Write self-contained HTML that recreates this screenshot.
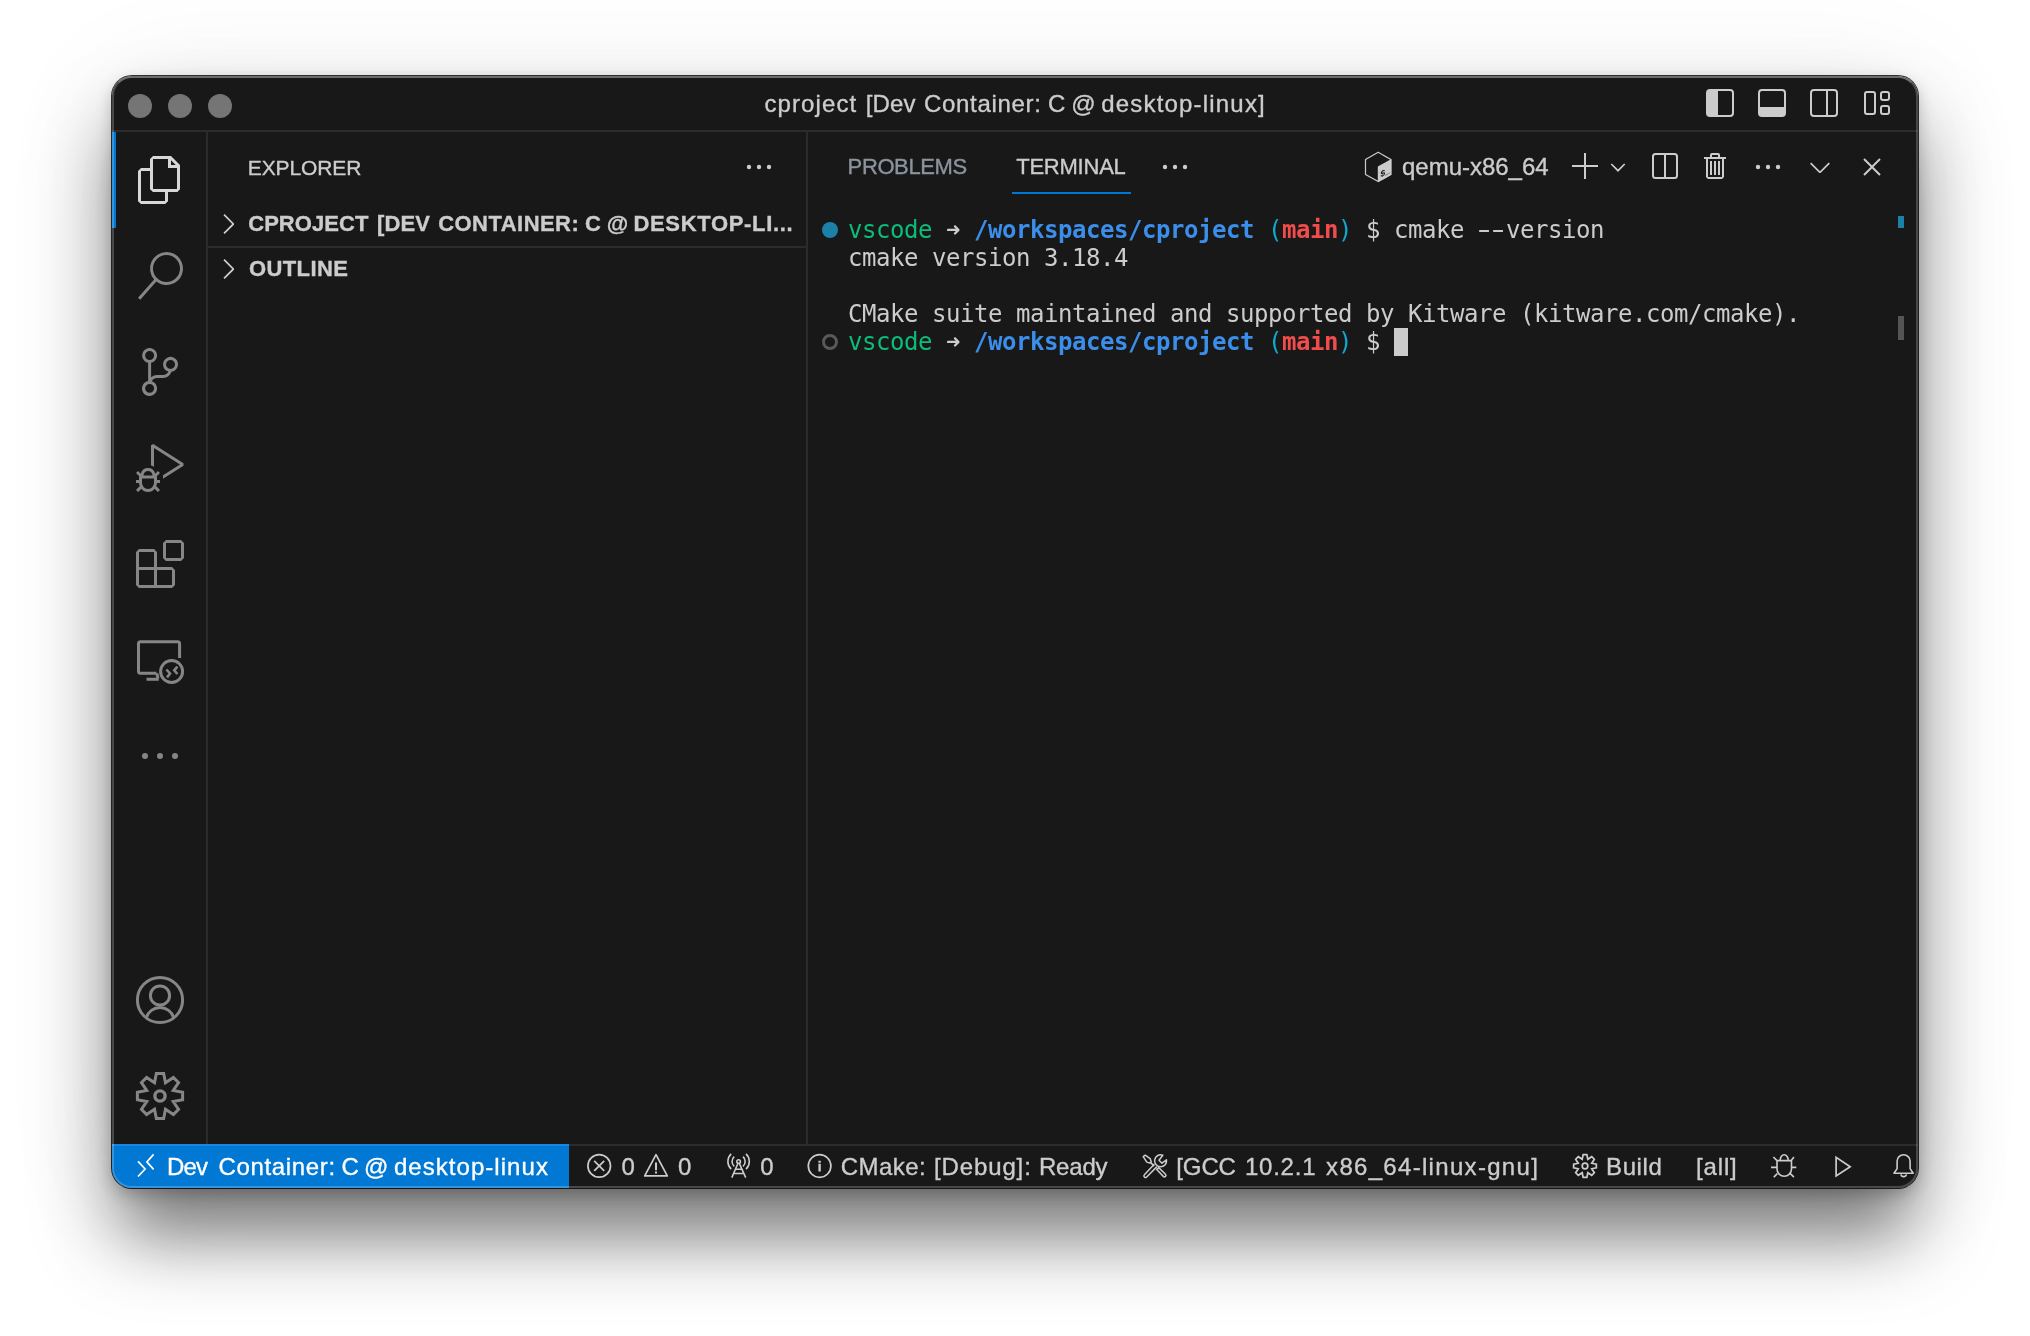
<!DOCTYPE html>
<html lang="en">
<head>
<meta charset="utf-8">
<title>cproject [Dev Container: C @ desktop-linux]</title>
<style>
*{box-sizing:border-box;margin:0;padding:0}
html,body{width:2030px;height:1336px;overflow:hidden;background:#fff}
body{position:relative;font-family:"Liberation Sans",sans-serif;color:#ccc}
.abs{position:absolute}
.w{position:absolute;top:0;left:0}
#shadow{position:absolute;left:112px;top:76px;width:1806px;height:1112px;border-radius:20px;
  box-shadow:0 0 0 1px rgba(0,0,0,.8),0 6px 16px rgba(0,0,0,.22),0 50px 80px rgba(0,0,0,.40),0 60px 50px -20px rgba(0,0,0,.16),0 10px 120px rgba(0,0,0,.08)}
#win{position:absolute;left:112px;top:76px;width:1806px;height:1112px;border-radius:20px;background:#181818;overflow:hidden;will-change:transform}
#rim{position:absolute;left:112px;top:76px;width:1806px;height:1112px;border-radius:20px;border:2px solid rgba(255,255,255,.21);border-top-color:rgba(255,255,255,.37);pointer-events:none}
.t{position:absolute;white-space:nowrap;line-height:1;-webkit-text-stroke:0.35px currentColor}
svg{position:absolute;overflow:visible}
/* title bar */
#titlebar{position:absolute;left:0;top:0;width:1806px;height:56px;border-bottom:2px solid #2b2b2b}
.tl{position:absolute;top:18px;width:24px;height:24px;border-radius:50%;background:#757575}
/* activity bar */
#act{position:absolute;left:0;top:56px;width:96px;height:1012px;border-right:2px solid #2b2b2b}
#actind{position:absolute;left:0;top:56px;width:4px;height:96px;background:#0078d4}
/* sidebar */
#side{position:absolute;left:96px;top:56px;width:600px;height:1012px;border-right:2px solid #2b2b2b}
/* status */
#status{position:absolute;left:0;top:1068px;width:1806px;height:44px;border-top:2px solid #2b2b2b;background:#181818}
#remote{position:absolute;left:0;top:1068px;width:457px;height:44px;background:#0078d4}
.st{font-size:24px;color:#ccc}
/* terminal */
.term{position:absolute;left:736px;font-family:"DejaVu Sans Mono","Liberation Mono",monospace;font-size:24px;line-height:28px;letter-spacing:-0.45px;white-space:pre;color:#ccc}
.hy{display:inline-block;transform:translateX(-1.2px) scaleX(1.6)}
.g{color:#0dbc79}.b{color:#3b8eea;font-weight:bold}.c{color:#11a8cd}.r{color:#f14c4c;font-weight:bold}
</style>
</head>
<body>
<div id="shadow"></div>
<div id="win">
  <div id="titlebar">
    <div class="tl" style="left:16px"></div>
    <div class="tl" style="left:56px"></div>
    <div class="tl" style="left:96px"></div>
    <div class="t" id="title" style="left:653.4px;top:16px;font-size:24px;color:#ccc"><span class="w" id="title-w0" style="left:-1.0px;letter-spacing:1.11px">cproject</span> <span class="w" id="title-w1" style="left:100.3px;letter-spacing:0.18px">[Dev</span> <span class="w" id="title-w2" style="left:158.5px;letter-spacing:0.7px">Container:</span> <span class="w" id="title-w3" style="left:282.7px;letter-spacing:0.0px">C</span> <span class="w" id="title-w4" style="left:305.8px;letter-spacing:0.0px">@</span> <span class="w" id="title-w5" style="left:335.8px;letter-spacing:1.19px">desktop-linux]</span></div>
    <svg style="left:1594px;top:13px" width="28" height="28"><rect x="1" y="1" width="26" height="26" rx="3" fill="none" stroke="#ccc" stroke-width="2"/><path d="M1 4a3 3 0 0 1 3-3h8v26H4a3 3 0 0 1-3-3z" fill="#ccc"/></svg>
    <svg style="left:1646px;top:13px" width="28" height="28"><rect x="1" y="1" width="26" height="26" rx="3" fill="none" stroke="#ccc" stroke-width="2"/><path d="M1 18h26v6a3 3 0 0 1-3 3H4a3 3 0 0 1-3-3z" fill="#ccc"/></svg>
    <svg style="left:1698px;top:13px" width="28" height="28"><rect x="1" y="1" width="26" height="26" rx="3" fill="none" stroke="#ccc" stroke-width="2"/><path d="M17 1v26" stroke="#ccc" stroke-width="2"/></svg>
    <svg style="left:1752px;top:15px" width="26" height="24" fill="none" stroke="#ccc" stroke-width="2"><rect x="1" y="1" width="10" height="22" rx="2"/><rect x="17" y="1" width="8" height="8" rx="2"/><rect x="17" y="15" width="8" height="8" rx="2"/></svg>
  </div>
  <div id="act"></div>
  <div id="actind"></div>

  <!-- activity bar icons (48x48 boxes, x=24) -->
  <svg id="i-files" style="left:24px;top:80px" width="48" height="48" viewBox="0 0 24 24"><path fill="#d7d7d7" d="M17.5 0h-9L7 1.5V6H2.5L1 7.5v15.07L2.5 24h12.07L16 22.57V18h4.7l1.3-1.43V4.5L17.5 0zm0 2.12l2.38 2.38H17.5V2.12zm-3 20.38h-12v-15H7v9.07L8.5 18h6v4.5zm6-6h-12v-15H16V6h4.5v10.5z"/></svg>
  <svg id="i-search" style="left:24px;top:176px" width="48" height="48" viewBox="0 0 24 24"><path fill="#868686" d="M15.25 0a8.25 8.25 0 0 0-6.18 13.72L1 22.88l1.12 1 8.05-9.12A8.251 8.251 0 1 0 15.25.01V0zm0 15a6.75 6.75 0 1 1 0-13.5 6.75 6.75 0 0 1 0 13.5z"/></svg>
  <svg id="i-scm" style="left:24px;top:272px" width="48" height="48" viewBox="0 0 24 24"><path fill="#868686" d="M21.007 8.222A3.738 3.738 0 0 0 15.045 5.2a3.737 3.737 0 0 0 1.156 6.583 2.988 2.988 0 0 1-2.668 1.67h-2.99a4.456 4.456 0 0 0-2.989 1.165V7.4a3.737 3.737 0 1 0-1.494 0v9.117a3.776 3.776 0 1 0 1.816.099 2.99 2.99 0 0 1 2.668-1.667h2.99a4.484 4.484 0 0 0 4.223-3.039 3.736 3.736 0 0 0 3.25-3.687zM4.565 3.738a2.242 2.242 0 1 1 4.484 0 2.242 2.242 0 0 1-4.484 0zm4.484 16.441a2.242 2.242 0 1 1-4.484 0 2.242 2.242 0 0 1 4.484 0zm8.221-9.715a2.242 2.242 0 1 1 0-4.485 2.242 2.242 0 0 1 0 4.485z"/></svg>
  <svg id="i-debug" style="left:24px;top:368px" width="48" height="48" viewBox="0 0 24 24"><path fill="#868686" d="M10.94 13.5l-1.32 1.32a3.73 3.73 0 0 0-7.24 0L1.06 13.5 0 14.56l1.72 1.72-.22.22V18H0v1.5h1.5v.08c.077.489.214.966.41 1.42L0 22.94 1.06 24l1.65-1.65A4.308 4.308 0 0 0 6 24a4.31 4.31 0 0 0 3.29-1.65L10.94 24 12 22.94 10.09 21c.198-.464.336-.951.41-1.45v-.1H12V18h-1.5v-1.5l-.22-.22L12 14.56l-1.06-1.06zM6 13.5a2.25 2.25 0 0 1 2.25 2.25h-4.5A2.25 2.25 0 0 1 6 13.5zm3 6a3.33 3.33 0 0 1-3 3 3.33 3.33 0 0 1-3-3v-2.250h6v2.250zm14.760-9.900v1.260L13.500 17.370V15.600l8.500-5.370L9 2v9.460a5.070 5.070 0 0 0-1.500-.720V.630L8.640 0l15.120 9.600z"/></svg>
  <svg id="i-ext" style="left:24px;top:464px" width="48" height="48" viewBox="0 0 24 24"><path fill="#868686" d="M13.5 1.500L15 0h7.500L24 1.500V9l-1.500 1.500H15L13.500 9V1.500zm1.500 0V9h7.500V1.500H15zM0 15V6l1.500-1.500H9L10.500 6v7.500H18l1.500 1.500v7.500L18 24H1.500L0 22.500V15zm9-1.500V6H1.500v7.500H9zM9 15H1.500v7.500H9V15zm1.500 7.500H18V15h-7.500v7.500z"/></svg>
  <svg id="i-remote" style="left:24px;top:560px" width="48" height="48" viewBox="0 0 48 48" fill="none" stroke="#868686" stroke-width="3">
    <path d="M43.600 22V7.800a2 2 0 0 0-2-2H4.500a2 2 0 0 0-2 2V35.300a2 2 0 0 0 2 2H20.500M20.800 37.300l1.200 5M10.500 43.300H22.800"/>
    <circle cx="35.600" cy="35.500" r="11"/>
    <path d="M30.400 33.500l3.600 4-3 3.900M41.400 30.600l-3.200 3.700 3.200 3.700" stroke-width="2.600"/>
  </svg>
  <svg id="i-more" style="left:24px;top:656px" width="48" height="48" viewBox="0 0 48 48"><g fill="#868686"><circle cx="9" cy="24" r="3"/><circle cx="24" cy="24" r="3"/><circle cx="39" cy="24" r="3"/></g></svg>
  <svg id="i-account" style="left:24px;top:900px" width="48" height="48" viewBox="0 0 48 48" fill="none" stroke="#868686" stroke-width="3">
    <circle cx="24" cy="24" r="22.600"/><circle cx="24" cy="19.500" r="9.600"/>
    <path d="M10.200 41.800A14.400 14.400 0 0 1 37.800 41.800"/>
  </svg>
  <svg id="i-gear" style="left:24px;top:996px" width="48" height="48" viewBox="0 0 48 48" fill="none" stroke="#868686" stroke-width="3" stroke-linejoin="miter">
    <path d="M20.340 1.390 L27.660 1.390 L29.470 10.790 L37.400 5.430 L42.570 10.600 L37.210 18.530 L46.610 20.340 L46.610 27.660 L37.210 29.470 L42.570 37.400 L37.400 42.570 L29.470 37.210 L27.660 46.610 L20.340 46.610 L18.530 37.210 L10.600 42.570 L5.430 37.400 L10.790 29.470 L1.390 27.660 L1.390 20.340 L10.790 18.530 L5.430 10.600 L10.600 5.430 L18.530 10.790Z"/>
    <circle cx="24" cy="24" r="5.100" stroke-width="3.400"/>
  </svg>
  <div id="side">

    <svg style="left:4px;top:76px" width="32" height="32" viewBox="0 0 16 16"><path fill="#ccc" d="M10.072 8.024L5.715 3.667l.618-.62L11 7.716v.618L6.333 13l-.618-.619 4.357-4.357z"/></svg>
    <svg style="left:4px;top:121px" width="32" height="32" viewBox="0 0 16 16"><path fill="#ccc" d="M10.072 8.024L5.715 3.667l.618-.62L11 7.716v.618L6.333 13l-.618-.619 4.357-4.357z"/></svg>
    <svg style="left:535px;top:19px" width="32" height="32" viewBox="0 0 32 32"><g fill="#ccc"><circle cx="6" cy="16" r="2.200"/><circle cx="16" cy="16" r="2.200"/><circle cx="26" cy="16" r="2.200"/></g></svg>
    <div class="t" id="t-exp" style="left:39.8px;top:24.5px;font-size:21px;color:#ccc;letter-spacing:-0.12px">EXPLORER</div>
    <div class="t" id="t-cpr" style="left:41px;top:81px;font-size:22px;font-weight:bold;color:#ccc"><span class="w" id="t-cpr-w0" style="left:-0.8px;letter-spacing:0.05px">CPROJECT</span> <span class="w" id="t-cpr-w1" style="left:127.9px;letter-spacing:0.18px">[DEV</span> <span class="w" id="t-cpr-w2" style="left:189.2px;letter-spacing:0.46px">CONTAINER:</span> <span class="w" id="t-cpr-w3" style="left:336.0px;letter-spacing:0.0px">C</span> <span class="w" id="t-cpr-w4" style="left:357.8px;letter-spacing:0.0px">@</span> <span class="w" id="t-cpr-w5" style="left:384.4px;letter-spacing:0.68px">DESKTOP-LI...</span></div>
    <div class="abs" style="left:0;top:114px;width:598px;height:2px;background:#2b2b2b"></div>
    <div class="t" id="t-out" style="left:41px;top:126px;font-size:22px;font-weight:bold;color:#ccc;letter-spacing:0.39px">OUTLINE</div>
  </div>
  <div id="panel">

    <svg style="left:1047px;top:75px" width="32" height="32" viewBox="0 0 32 32"><g fill="#ccc"><circle cx="6" cy="16" r="2.200"/><circle cx="16" cy="16" r="2.200"/><circle cx="26" cy="16" r="2.200"/></g></svg>
    <svg id="i-bash" style="left:1250px;top:73px" width="32" height="36" viewBox="0 0 32 36">
      <path d="M16.200 3.300L28.900 10.600V25.400L16.200 32.600L3.500 25.400V10.600Z" fill="none" stroke="#ccc" stroke-width="1.200" stroke-linejoin="round"/>
      <path d="M15.800 17.600L29.300 9.900V25.700L15.800 33.300Z" fill="#ccc"/>
      <text x="0" y="0" transform="matrix(1 -0.560 0 1 18.200 28.600)" font-family="Liberation Mono, monospace" font-weight="bold" font-size="8.500" fill="#181818">$_</text>
    </svg>
    <svg style="left:1460px;top:77px" width="26" height="26"><path d="M0 13h26M13 0v26" stroke="#ccc" stroke-width="2" fill="none"/></svg>
    <svg style="left:1498px;top:86px" width="16" height="12"><path d="M1.300 2l6.700 6.700L14.700 2" stroke="#ccc" stroke-width="1.700" fill="none"/></svg>
    <svg style="left:1540px;top:77px" width="26" height="26"><rect x="1" y="1" width="24" height="24" rx="2.500" fill="none" stroke="#ccc" stroke-width="2"/><path d="M13 1v24" stroke="#ccc" stroke-width="2"/></svg>
    <svg style="left:1588px;top:75px" width="32" height="32" viewBox="0 0 16 16"><path fill="#ccc" d="M10 3h3v1h-1v9l-1 1H4l-1-1V4H2V3h3V2a1 1 0 0 1 1-1h3a1 1 0 0 1 1 1v1zM9 2H6v1h3V2zM4 13h7V4H4v9zm2-8H5v7h1V5zm1 0h1v7H7V5zm2 0h1v7H9V5z"/></svg>
    <svg style="left:1640px;top:75px" width="32" height="32" viewBox="0 0 32 32"><g fill="#ccc"><circle cx="6" cy="16" r="2.200"/><circle cx="16" cy="16" r="2.200"/><circle cx="26" cy="16" r="2.200"/></g></svg>
    <svg style="left:1692px;top:75px" width="32" height="32" viewBox="0 0 16 16"><path fill="#ccc" d="M7.976 10.072l4.357-4.357.62.618L8.284 11h-.618L3 6.333l.619-.618 4.357 4.357z"/></svg>
    <svg style="left:1744px;top:75px" width="32" height="32" viewBox="0 0 16 16"><path fill="#ccc" d="M8 8.707l3.646 3.647.708-.707L8.707 8l3.647-3.646-.707-.708L8 7.293 4.354 3.646l-.707.708L7.293 8l-3.646 3.646.707.708L8 8.707z"/></svg>
    <div class="abs" style="left:710px;top:146px;width:16px;height:16px;border-radius:50%;background:#1b81a8"></div>
    <div class="abs" style="left:710px;top:258px;width:16px;height:16px;border-radius:50%;border:3px solid #595959"></div>
    <div class="abs" style="left:1282px;top:252px;width:14px;height:28px;background:#ccc"></div>
    <div class="abs" style="left:1786px;top:140px;width:6px;height:12px;background:#1b81a8"></div>
    <div class="abs" style="left:1786px;top:240px;width:6px;height:24px;background:#555"></div>
    <div class="t" id="t-prob" style="left:735.6px;top:80px;font-size:22px;color:#8b949e;letter-spacing:-0.39px">PROBLEMS</div>
    <div class="t" id="t-term" style="left:904.2px;top:80px;font-size:22px;color:#ccc;letter-spacing:-0.23px">TERMINAL</div>
    <div class="abs" style="left:900px;top:116px;width:119px;height:2px;background:#0078d4"></div>
    <div class="t" id="t-qemu" style="left:1290.0px;top:79px;font-size:24px;color:#ccc;letter-spacing:-0.02px">qemu-x86_64</div>
    <div class="term" style="top:140px"><span class="g">vscode</span> ➜ <span class="b">/workspaces/cproject</span> <span class="c">(</span><span class="r">main</span><span class="c">)</span> $ cmake <span class="hy">-</span><span class="hy">-</span>version</div>
    <div class="term" style="top:168px">cmake version 3.18.4</div>
    <div class="term" style="top:224px">CMake suite maintained and supported by Kitware (kitware.com/cmake).</div>
    <div class="term" style="top:252px"><span class="g">vscode</span> ➜ <span class="b">/workspaces/cproject</span> <span class="c">(</span><span class="r">main</span><span class="c">)</span> $ </div>
  </div>
  <div id="status"></div>
  <div id="remote"></div>
  <div class="abs" style="left:0;top:1068px;width:457px;height:2px;background:#1a87df"></div>

  <svg style="left:24px;top:1076px" width="20" height="26" fill="none" stroke="#fff" stroke-width="1.700"><path d="M2 3.400L9.100 11L2 18.500M17.600 -3.600L10.900 3.900L17.600 11.400" transform="translate(0,6)"/></svg>
  <svg style="left:475px;top:1077px" width="26" height="26" fill="none" stroke="#ccc" stroke-width="1.700"><circle cx="12.200" cy="12.900" r="11.300"/><path d="M7.200 7.900l10 10M17.200 7.900l-10 10"/></svg>
  <svg style="left:531px;top:1077px" width="26" height="26" fill="none" stroke="#ccc" stroke-width="1.700"><path d="M13 1.700L24.300 22.900H1.700Z" stroke-linejoin="round"/><path d="M13 9.600v7.600M13 18.600v1.800" stroke-width="2"/></svg>
  <svg style="left:614px;top:1077px" width="26" height="26" fill="none" stroke="#ccc" stroke-width="1.600"><circle cx="12.600" cy="8.500" r="1.800"/><path d="M12 10.200L5.800 24.600M13.200 10.200L19.700 24.600M10 16.300h5.300M7.900 20.500h9.500"/><path d="M8.200 3.700A6.400 6.400 0 0 0 8.200 13.300M17 3.700A6.400 6.400 0 0 1 17 13.300M5.200 0.800A10.600 10.600 0 0 0 5.200 16.200M20 0.800A10.600 10.600 0 0 1 20 16.200"/></svg>
  <svg style="left:695px;top:1077px" width="26" height="26" fill="none" stroke="#ccc" stroke-width="1.700"><circle cx="12.600" cy="13" r="11.300"/><path d="M12.600 7.800v1.900M12.600 10.800v7.600" stroke-width="2.400"/></svg>
  <svg id="i-tools" style="left:1030px;top:1078px" width="26" height="26" fill="none" stroke="#ccc" stroke-width="1.500" stroke-linejoin="round" stroke-linecap="round">
    <path d="M12 10.400L2.400 20.700a1.600 1.600 0 0 0 2.300 2.300L14.500 13.100"/>
    <path d="M20.800 1.200A6 6 0 1 0 24.500 5.800L20 9.200L17 6.300L20.800 1.200Z"/>
    <path d="M1.200 2.600l2-1.400l5 3.500l1 3l-1.400 1.400l-3-1zM8.500 8.400l3.200 3.200M14.700 15.600l2-2l6.800 6.600a1.500 1.500 0 0 1-2.200 2.200z"/>
  </svg>
  <svg style="left:1460px;top:1078px" width="26" height="24" fill="none" stroke="#ccc" stroke-width="1.700"><path d="M11.16 0.65 L14.84 0.65 L15.79 5.26 L19.73 2.67 L22.33 5.27 L19.74 9.21 L24.35 10.16 L24.35 13.84 L19.74 14.79 L22.33 18.73 L19.73 21.33 L15.79 18.74 L14.84 23.35 L11.16 23.35 L10.21 18.74 L6.27 21.33 L3.67 18.73 L6.26 14.79 L1.65 13.84 L1.65 10.16 L6.26 9.21 L3.67 5.27 L6.27 2.67 L10.21 5.26Z"/><circle cx="13" cy="12" r="2.800"/></svg>
  <svg style="left:1658px;top:1077px" width="28" height="26" fill="none" stroke="#ccc" stroke-width="1.600"><path d="M7 7.600H21.500V16a7.250 7.250 0 0 1-14.500 0ZM10.100 7.600A4.100 5.900 0 0 1 18.300 7.600M3.400 4l3.600 3.600M24 4l-2.800 3.600M1 14.400h5.600M22.100 14.400h4.200M3.800 24.100l3.500-3.500M23.900 24.100l-3.500-3.500"/></svg>
  <svg style="left:1722px;top:1078px" width="20" height="26" fill="none" stroke="#ccc" stroke-width="1.700"><path d="M2.100 3.400V22L16.200 12.700Z" stroke-linejoin="miter"/></svg>
  <svg style="left:1780px;top:1077px" width="24" height="26" fill="none" stroke="#ccc" stroke-width="1.600" stroke-linejoin="round"><path d="M2 20.200L5.100 15.600V8.200a6.500 6.500 0 0 1 13 0V15.600L21.200 20.200ZM8.900 21.400a2.800 2.800 0 0 0 5.500 0"/></svg>
  <div class="t st" id="s-dev" style="left:54.8px;top:1079px;color:#fff"><span class="w" id="s-dev-w0" style="left:0.2px;letter-spacing:-0.81px">Dev</span> <span class="w" id="s-dev-w1" style="left:51.8px;letter-spacing:0.64px">Container:</span> <span class="w" id="s-dev-w2" style="left:174.7px;letter-spacing:0.0px">C</span> <span class="w" id="s-dev-w3" style="left:197.3px;letter-spacing:0.0px">@</span> <span class="w" id="s-dev-w4" style="left:227.1px;letter-spacing:1.05px">desktop-linux</span></div>
  <div class="t st" id="s-0a" style="left:509.6px;top:1079px;letter-spacing:0px">0</div>
  <div class="t st" id="s-0b" style="left:566px;top:1079px;letter-spacing:0px">0</div>
  <div class="t st" id="s-0c" style="left:648.2px;top:1079px;letter-spacing:0px">0</div>
  <div class="t st" id="s-cmake" style="left:728.6px;top:1079px"><span class="w" id="s-cmake-w0" style="left:0.2px;letter-spacing:0.43px">CMake:</span> <span class="w" id="s-cmake-w1" style="left:93.4px;letter-spacing:0.87px">[Debug]:</span> <span class="w" id="s-cmake-w2" style="left:198.3px;letter-spacing:-0.18px">Ready</span></div>
  <div class="t st" id="s-gcc" style="left:1064.2px;top:1079px"><span class="w" id="s-gcc-w0" style="left:0.1px;letter-spacing:-0.12px">[GCC</span> <span class="w" id="s-gcc-w1" style="left:68.7px;letter-spacing:0.79px">10.2.1</span> <span class="w" id="s-gcc-w2" style="left:149.9px;letter-spacing:1.31px">x86_64-linux-gnu]</span></div>
  <div class="t st" id="s-build" style="left:1494px;top:1079px;letter-spacing:0.63px">Build</div>
  <div class="t st" id="s-all" style="left:1584px;top:1079px;letter-spacing:0.85px">[all]</div>
</div>
<div id="rim"></div>
</body>
</html>
